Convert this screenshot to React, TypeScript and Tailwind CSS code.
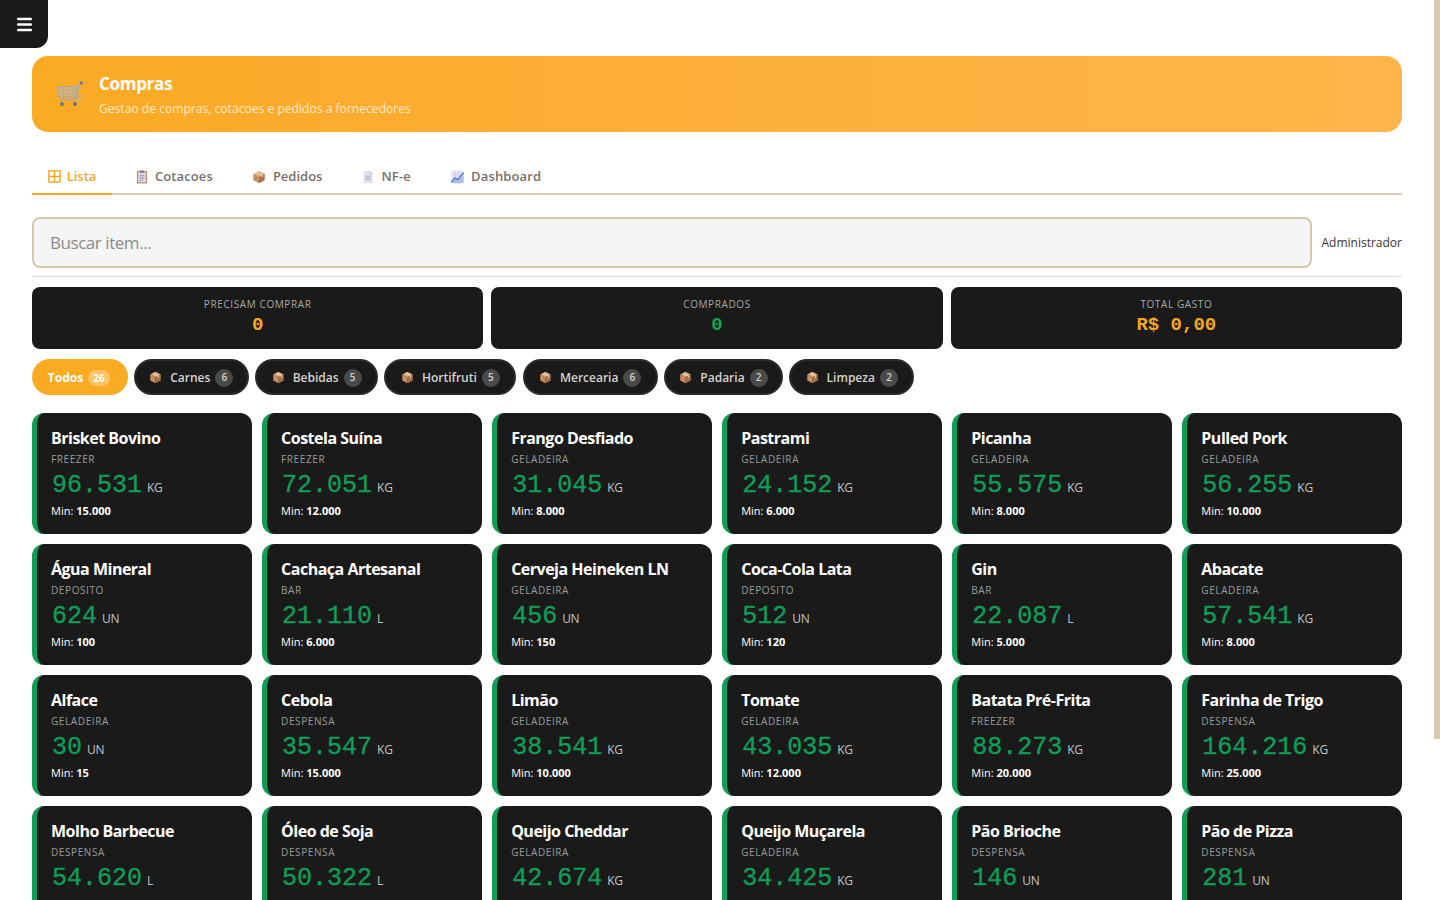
import React from 'react';
import { Menu } from 'lucide-react';

type Item = { name: string; place: string; qty: string; unit: string; min: string };

const items: Item[] = [
    { name: 'Brisket Bovino', place: 'FREEZER', qty: '96.531', unit: 'KG', min: '15.000' },
    { name: 'Costela Suína', place: 'FREEZER', qty: '72.051', unit: 'KG', min: '12.000' },
    { name: 'Frango Desfiado', place: 'GELADEIRA', qty: '31.045', unit: 'KG', min: '8.000' },
    { name: 'Pastrami', place: 'GELADEIRA', qty: '24.152', unit: 'KG', min: '6.000' },
    { name: 'Picanha', place: 'GELADEIRA', qty: '55.575', unit: 'KG', min: '8.000' },
    { name: 'Pulled Pork', place: 'GELADEIRA', qty: '56.255', unit: 'KG', min: '10.000' },
    { name: 'Água Mineral', place: 'DEPOSITO', qty: '624', unit: 'UN', min: '100' },
    { name: 'Cachaça Artesanal', place: 'BAR', qty: '21.110', unit: 'L', min: '6.000' },
    { name: 'Cerveja Heineken LN', place: 'GELADEIRA', qty: '456', unit: 'UN', min: '150' },
    { name: 'Coca-Cola Lata', place: 'DEPOSITO', qty: '512', unit: 'UN', min: '120' },
    { name: 'Gin', place: 'BAR', qty: '22.087', unit: 'L', min: '5.000' },
    { name: 'Abacate', place: 'GELADEIRA', qty: '57.541', unit: 'KG', min: '8.000' },
    { name: 'Alface', place: 'GELADEIRA', qty: '30', unit: 'UN', min: '15' },
    { name: 'Cebola', place: 'DESPENSA', qty: '35.547', unit: 'KG', min: '15.000' },
    { name: 'Limão', place: 'GELADEIRA', qty: '38.541', unit: 'KG', min: '10.000' },
    { name: 'Tomate', place: 'GELADEIRA', qty: '43.035', unit: 'KG', min: '12.000' },
    { name: 'Batata Pré-Frita', place: 'FREEZER', qty: '88.273', unit: 'KG', min: '20.000' },
    { name: 'Farinha de Trigo', place: 'DESPENSA', qty: '164.216', unit: 'KG', min: '25.000' },
    { name: 'Molho Barbecue', place: 'DESPENSA', qty: '54.620', unit: 'L', min: '10.000' },
    { name: 'Óleo de Soja', place: 'DESPENSA', qty: '50.322', unit: 'L', min: '15.000' },
    { name: 'Queijo Cheddar', place: 'GELADEIRA', qty: '42.674', unit: 'KG', min: '10.000' },
    { name: 'Queijo Muçarela', place: 'GELADEIRA', qty: '34.425', unit: 'KG', min: '10.000' },
    { name: 'Pão Brioche', place: 'DESPENSA', qty: '146', unit: 'UN', min: '50' },
    { name: 'Pão de Pizza', place: 'DESPENSA', qty: '281', unit: 'UN', min: '40' },
];

const categories = [
    { name: 'Carnes', count: 6, width: 'w-[115px]' },
    { name: 'Bebidas', count: 5, width: 'w-[123px]' },
    { name: 'Hortifruti', count: 5, width: 'w-[132px]' },
    { name: 'Mercearia', count: 6, width: 'w-[135px]' },
    { name: 'Padaria', count: 2, width: 'w-[119px]' },
    { name: 'Limpeza', count: 2, width: 'w-[125px]' },
];

function BoxIcon({ className }: { className: string }) {
    return (
        <svg viewBox="0 0 16 16" className={className}>
            <path d="M8 1 14.5 4.4 8 7.8 1.5 4.4Z" fill="#dcae82" />
            <path d="M1.5 4.4 8 7.8V15L1.5 11.6Z" fill="#c98d5e" />
            <path d="M14.5 4.4 8 7.8V15L14.5 11.6Z" fill="#a9714a" />
            <path d="M4.4 2.9 11 6.3V8.6L12.2 8V5.6L5.6 2.3Z" fill="#efd9bf" />
        </svg>
    );
}

function ListIcon() {
    return (
        <svg viewBox="0 0 14 14" className="w-[13px] h-[13px]" fill="none" stroke="#f5a623" strokeWidth="1.5">
            <rect x="1" y="1" width="12" height="12" />
            <path d="M7 1v12M1 7h12" />
        </svg>
    );
}

function ClipboardIcon() {
    return (
        <svg viewBox="0 0 14 16" className="w-[12px] h-[14px]">
            <rect x="1" y="1" width="12" height="14.5" rx="1" fill="#c08f73" />
            <rect x="2.5" y="2.5" width="9" height="11.5" fill="#e3dff0" />
            <rect x="4.5" y="0.5" width="5" height="2.5" rx="0.5" fill="#777" />
            <path d="M4 6h6M4 8h6M4 10h6M4 12h4" stroke="#8d8a99" strokeWidth="0.9" />
        </svg>
    );
}

function DocIcon() {
    return (
        <svg viewBox="0 0 14 16" className="w-[12px] h-[14px]">
            <path d="M2 1h7l3.5 3.5V15H2Z" fill="#e2dfee" />
            <path d="M9 1v3.5h3.5Z" fill="#c4c0d6" />
            <path d="M4 7h6M4 9h6M4 11h6" stroke="#a5a2ba" strokeWidth="0.9" />
        </svg>
    );
}

function ChartIcon() {
    return (
        <svg viewBox="0 0 16 16" className="w-[15px] h-[14px]">
            <rect x="1" y="1" width="14" height="14" fill="#e6e3ef" />
            <path d="M1 5.5h14M1 10h14M5.5 1v14M10 1v14" stroke="#c9c5da" strokeWidth="0.6" />
            <path d="M1 14 5 9l3 2 7-8" fill="none" stroke="#4a7fd4" strokeWidth="1.5" />
            <path d="M1 14 5 9l3 2 7-8v12H1Z" fill="#4a7fd4" fillOpacity="0.35" />
        </svg>
    );
}

function CartIcon() {
    return (
        <svg viewBox="0 0 28 26" className="w-[28px] h-[26px]" fill="none">
            <path d="M1.5 5.5H21L19.5 16H3Z" fill="#d9b47a" stroke="#a8a8a0" strokeWidth="1.2" />
            <path d="M1.8 9h18.6M2.3 12.5h17.6M7 5.5 7.6 16M12 5.5V16M17 5.5 16 16" stroke="#b9a98a" strokeWidth="0.9" />
            <path d="M26 2 23.2 2.4 20 18.5H4" stroke="#a9a9a5" strokeWidth="1.5" />
            <path d="M20 18.5c4.5.5 6-1 5.5-2.6-.4-1.4-2.6-1.5-4.7-1.4" stroke="#b8b8b0" strokeWidth="1.2" />
            <rect x="24" y="0.5" width="3" height="3" rx="0.8" fill="#667a8c" />
            <circle cx="6" cy="23" r="1.9" fill="#5b7590" />
            <circle cx="19" cy="23" r="1.9" fill="#5b7590" />
        </svg>
    );
}

function ProductCard({ item }: { item: Item }) {
    return (
        <div className="h-[120.6px] rounded-xl bg-[#1a1a1a] border-l-[5px] border-[#0f9d58] pl-[14px] pr-3 pt-[13px]">
            <div className="text-base leading-6 font-bold text-white tracking-[-0.5px] whitespace-nowrap">{item.name}</div>
            <div className="text-[10px] leading-[14px] mt-[2px] text-[#9a9a9a] tracking-[0.6px]">{item.place}</div>
            <div className="flex items-baseline mt-[4px] h-8">
                <span className="font-['Liberation_Mono',monospace] text-[25px] leading-8 text-[#0f9d58] ml-[1px] [-webkit-text-stroke:0.35px_#0f9d58]">{item.qty}</span>
                <span className="text-xs text-[#c4c4c4] ml-[5px] tracking-[-0.3px]">{item.unit}</span>
            </div>
            <div className="text-[11px] leading-4 mt-[1px] text-white">
                Min: <span className="font-bold">{item.min}</span>
            </div>
        </div>
    );
}

export default function App() {
    return (
        <div className="relative flex h-screen w-full overflow-hidden bg-white font-['Open_Sans',sans-serif]">
            {/* Menu button */}
            <button className="absolute left-0 top-0 z-10 flex h-12 w-12 items-center justify-center rounded-br-xl bg-[#1a1a1a] text-white">
                <Menu className="w-[19px] h-[19px]" strokeWidth={3} />
            </button>

            <div className="flex-1 min-w-0 overflow-hidden px-8 pt-14">
                {/* Page header */}
                <div className="flex h-[76px] items-center gap-[15px] rounded-2xl bg-gradient-to-r from-[#fbaa23] to-[#ffb54a] pl-[24px] text-white">
                    <CartIcon />
                    <div className="pt-[2px]">
                        <div className="text-[17px] leading-6 font-bold tracking-[-0.3px]">Compras</div>
                        <div className="text-xs leading-5 mt-[3px] text-[#ffeacb] tracking-[0.05px]">Gestao de compras, cotacoes e pedidos a fornecedores</div>
                    </div>
                </div>

                {/* Tabs */}
                <div className="flex h-[36px] mt-[27px] pt-[1px] items-stretch border-b-2 border-[#dccdb4] text-[13px] text-[#77706a] font-semibold">
                    <div className="-mb-[2px] flex w-[80px] items-center justify-center gap-[6px] border-b-2 border-[#f5a623] text-[#f5a623]">
                        <ListIcon /> Lista
                    </div>
                    <div className="flex items-center gap-[7px] pl-[24px] tracking-[0.1px]"><ClipboardIcon /> Cotacoes</div>
                    <div className="flex items-center gap-[7px] pl-[39px]"><BoxIcon className="w-[14px] h-[14px]" /> Pedidos</div>
                    <div className="flex items-center gap-[7px] pl-[40px] tracking-[0.2px]"><DocIcon /> NF-e</div>
                    <div className="flex items-center gap-[6px] pl-[39px] tracking-[0.15px]"><ChartIcon /> Dashboard</div>
                </div>

                {/* Search */}
                <div className="flex items-center gap-[10px] mt-[22px] pb-[8px] border-b border-[#e3dccd]">
                    <div className="flex h-[51px] flex-1 items-center rounded-lg border-2 border-[#d6c8ad] bg-[#f5f5f5] px-4 text-[17px] text-[#8a8a8a] tracking-[-0.45px]">
                        Buscar item...
                    </div>
                    <span className="text-xs text-[#3b3230]">Administrador</span>
                </div>

                {/* Stats */}
                <div className="grid grid-cols-3 gap-2 mt-[10px]">
                    <Stat label="PRECISAM COMPRAR" value="0" color="text-[#f5a623]" />
                    <Stat label="COMPRADOS" value="0" color="text-[#16a34a]" />
                    <Stat label="TOTAL GASTO" value="R$ 0,00" color="text-[#f5a623]" />
                </div>

                {/* Category filters */}
                <div className="flex gap-[6.3px] mt-[10px]">
                    <div className="flex h-9 w-[95.5px] items-center justify-center gap-[5px] rounded-full bg-[#fbaa23] pr-[2px] pt-[1px] text-xs font-bold text-white">
                        Todos
                        <span className="rounded-full bg-white/30 px-[5px] text-[10px] leading-4">26</span>
                    </div>
                    {categories.map(cat => (
                        <div key={cat.name} className={`${cat.width} flex h-9 items-center justify-center gap-[5px] rounded-full border-2 border-[#2b2b2b] bg-[#1a1a1a] pt-[1px] text-xs font-semibold text-[#d6d3cf]`}>
                            <BoxIcon className="w-[13px] h-[13px] mr-[3px]" />
                            {cat.name}
                            <span className="flex h-[18px] min-w-[18px] items-center justify-center rounded-full bg-[#4a4a4a] text-[10px]">{cat.count}</span>
                        </div>
                    ))}
                </div>

                {/* Item grid */}
                <div className="grid grid-cols-6 gap-[10.4px] mt-[18px]">
                    {items.map(item => (
                        <ProductCard key={item.name} item={item} />
                    ))}
                </div>
            </div>

            {/* Scrollbar */}
            <div className="w-[6px] shrink-0 bg-white">
                <div className="h-[739px] bg-[#d9c9ae]" />
            </div>
        </div>
    );
}

function Stat({ label, value, color }: { label: string; value: string; color: string }) {
    return (
        <div className="flex h-[62px] flex-col items-center rounded-lg bg-[#1a1a1a] pt-[10px]">
            <div className="text-[10px] leading-[14px] tracking-[0.6px] text-[#a8a8a8]">{label}</div>
            <div className={`font-['Liberation_Mono',monospace] text-[19px] leading-[24px] mt-[2px] font-bold ${color}`}>{value}</div>
        </div>
    );
}
